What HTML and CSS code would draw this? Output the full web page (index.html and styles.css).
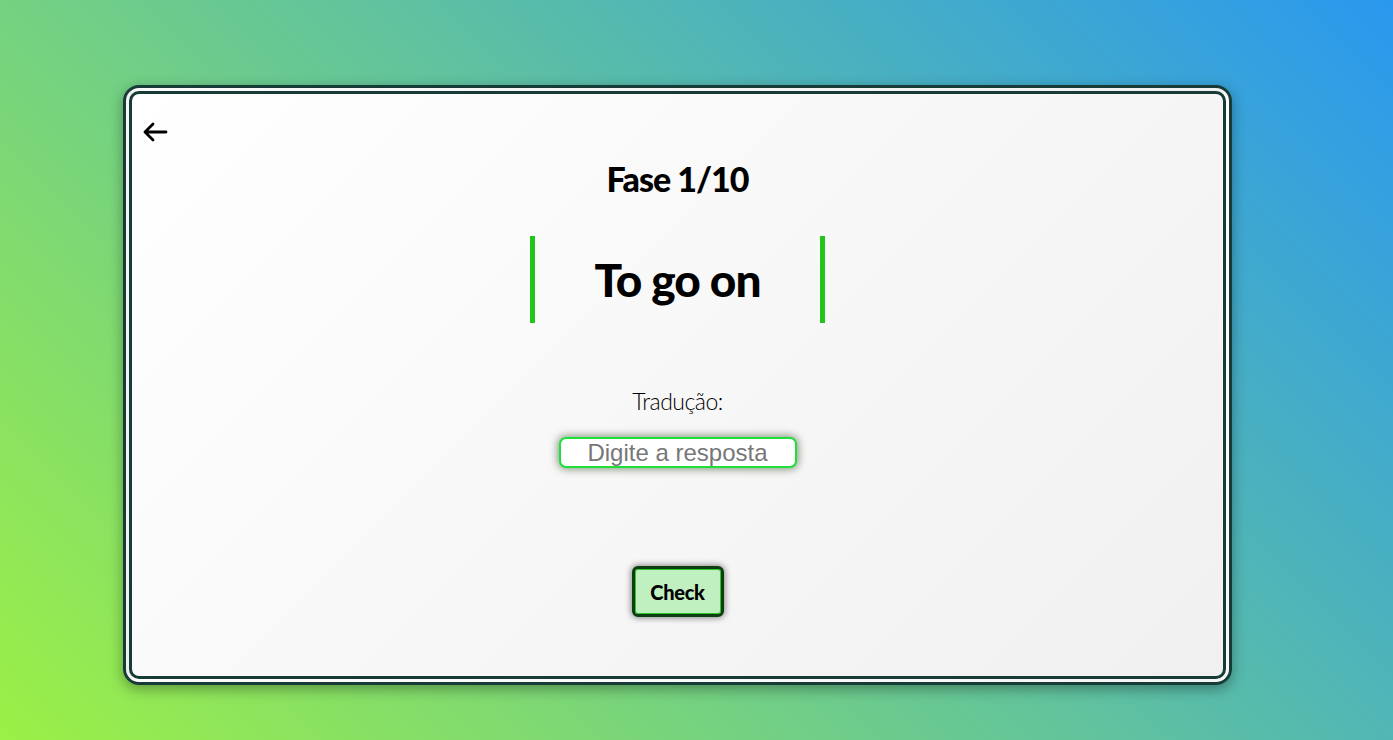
FILE: index.html
```html
<!DOCTYPE html>
<html lang="pt">
<head>
<meta charset="utf-8">
<title>Fase 1/10</title>
<link rel="stylesheet" href="styles.css">
</head>
<body>
<main class="page">
  <section class="card">
    <div class="top-row">
      <button class="back" aria-label="Voltar">
        <svg width="26" height="24" viewBox="0 0 26 24" fill="none" stroke="#000" stroke-width="2.8" stroke-linecap="round" stroke-linejoin="round"><path d="M24 12H3M11 4L3 12L11 20"/></svg>
      </button>
    </div>
    <h1 class="phase">Fase 1/10</h1>
    <div class="word-box"><span class="word">To go on</span></div>
    <label class="label" for="answer">Tradução:</label>
    <input id="answer" class="answer" type="text" placeholder="Digite a resposta">
    <button class="check">Check</button>
  </section>
</main>
</body>
</html>
```

FILE: styles.css
```css
html, body {
  margin: 0;
  height: 100%;
}
body {
  background: linear-gradient(45deg, #9cf046 0%, #2a98ef 100%);
  font-family: Lato, "DejaVu Sans", sans-serif;
}
.page {
  display: flex;
  padding: 85px 0 0 123px;
}
.card {
  box-sizing: border-box;
  width: 1109px;
  height: 600px;
  border: 9px double #173c37;
  border-radius: 16px;
  background: linear-gradient(135deg, #ffffff 0%, #f0f0f0 100%);
  box-shadow: 0 4px 14px rgba(0, 0, 0, 0.35);
  display: flex;
  flex-direction: column;
  align-items: center;
  padding: 26px 10px 0;
}
.top-row {
  align-self: stretch;
  display: flex;
}
.back {
  border: 0;
  background: none;
  padding: 0;
  margin: 0;
  width: 26px;
  height: 24px;
  cursor: pointer;
  display: flex;
}
.phase {
  margin: 15px 0 0;
  font-size: 34px;
  line-height: 40px;
  font-weight: 900;
  color: #000;
  letter-spacing: -1px;
}
.word-box {
  margin-top: 37px;
  box-sizing: border-box;
  width: 295px;
  height: 87px;
  border-left: 5px solid #22c51a;
  border-right: 5px solid #22c51a;
  display: flex;
  align-items: center;
  justify-content: center;
}
.word {
  font-size: 46px;
  font-weight: 900;
  color: #000;
  letter-spacing: -1px;
}
.label {
  margin-top: 63px;
  font-size: 23px;
  line-height: 30px;
  font-weight: 300;
  color: #000;
  letter-spacing: -0.5px;
}
.answer {
  margin-top: 21px;
  box-sizing: border-box;
  width: 238px;
  height: 31px;
  border: 2px solid #1fe03a;
  border-radius: 7px;
  background: #fff;
  box-shadow: 0 0 8px 1px rgba(45, 75, 35, 0.6);
  font-family: "Liberation Sans", Arial, sans-serif;
  font-size: 24px;
  text-align: center;
  padding: 0 2px;
  outline: none;
}
.answer::placeholder {
  color: #777;
}
.check {
  margin-top: 98px;
  box-sizing: border-box;
  width: 92px;
  height: 51px;
  border: 3px solid #0d3d10;
  border-radius: 6px;
  background: #c0efc0;
  box-shadow: inset 0 0 0 1px #2bc72b, 0 0 6px 1px rgba(0, 0, 0, 0.45);
  font-family: inherit;
  font-size: 20px;
  font-weight: 900;
  color: #000;
  letter-spacing: -0.3px;
  cursor: pointer;
}
```
